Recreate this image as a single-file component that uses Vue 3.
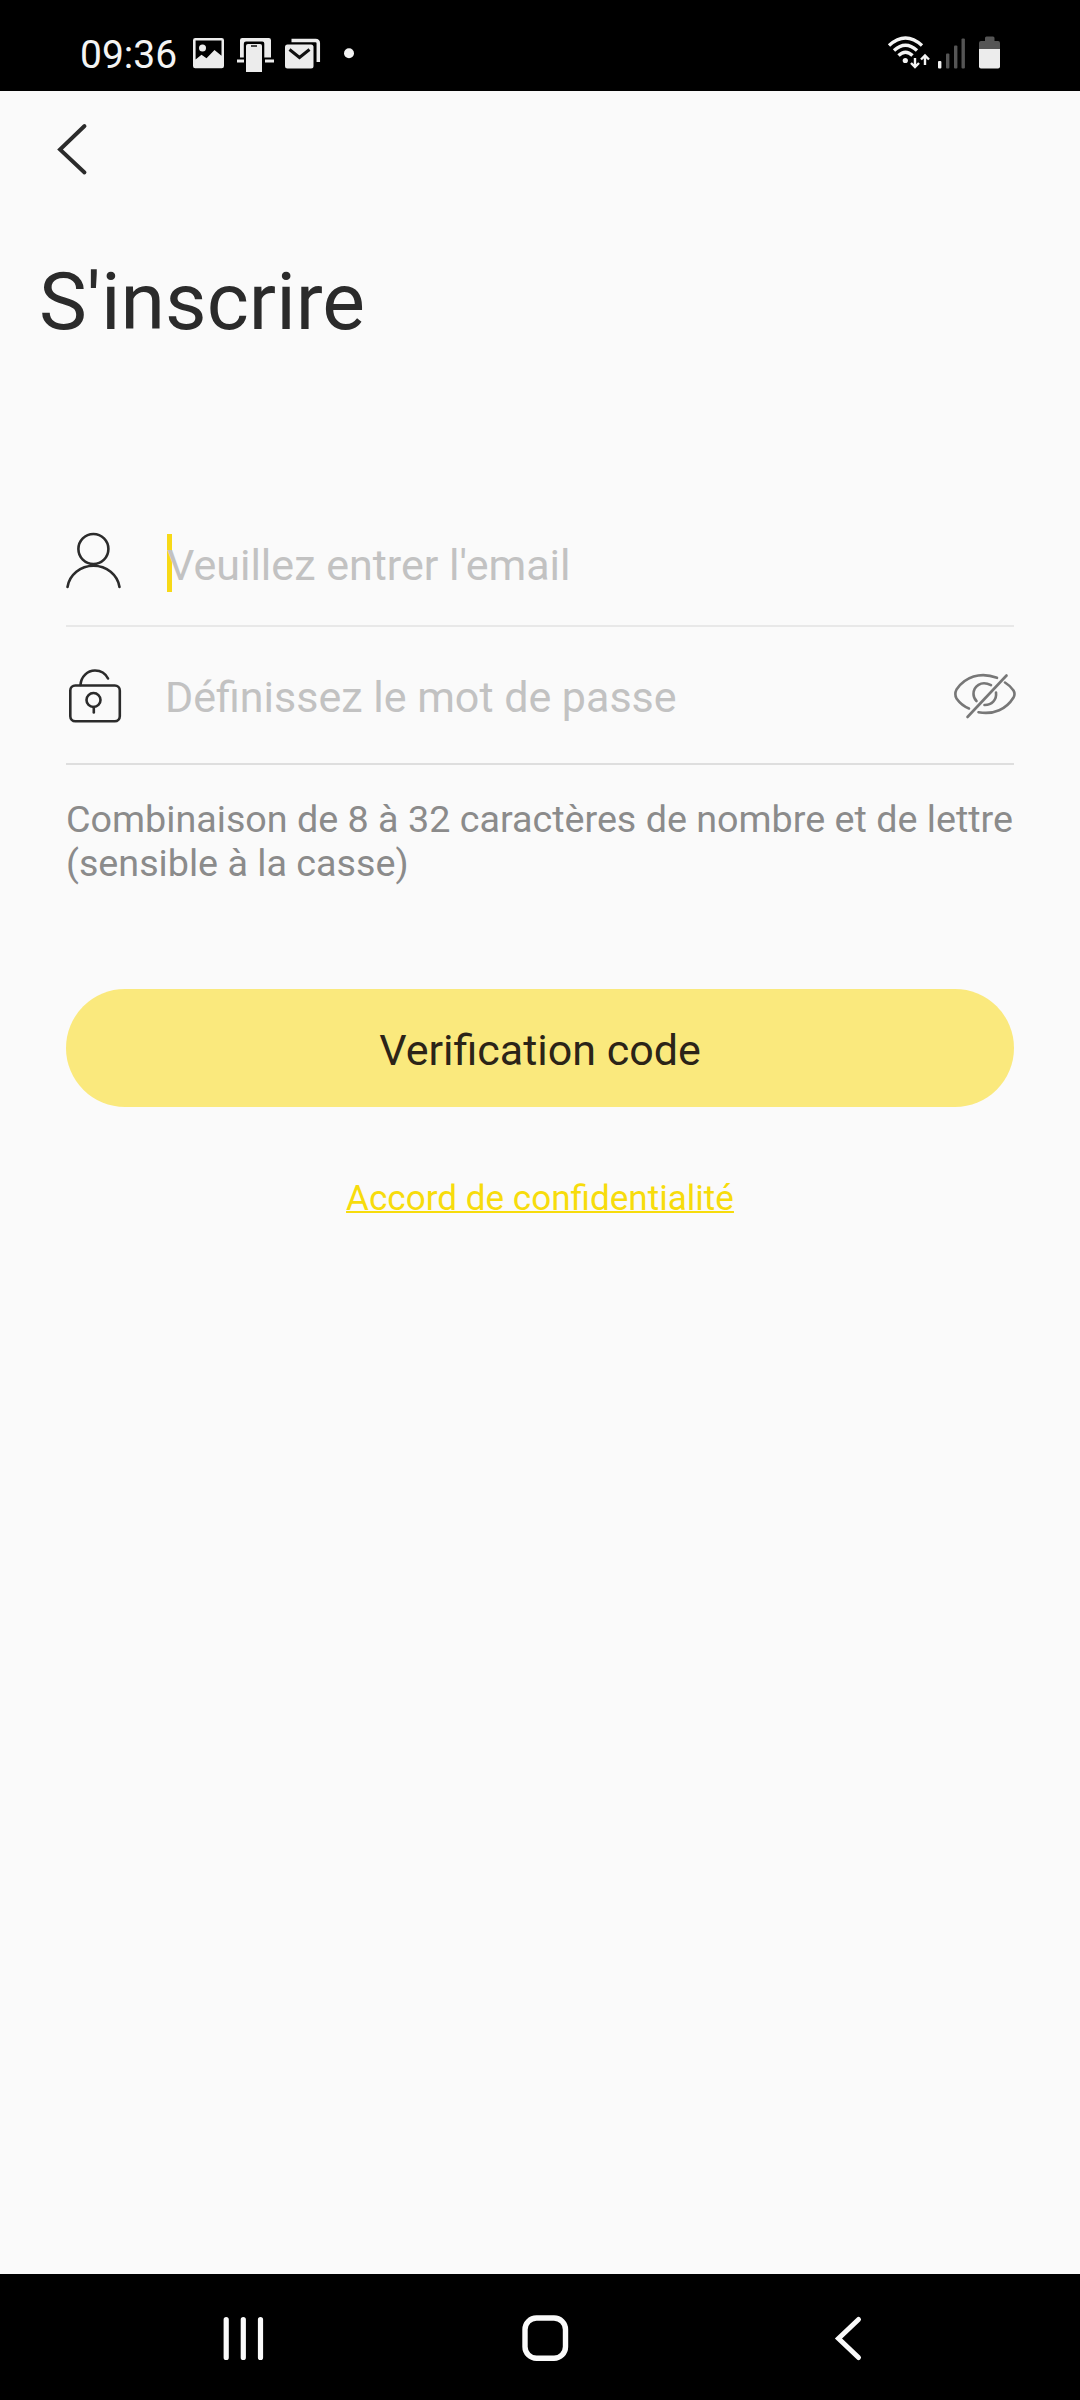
<script setup>
const title = "S'inscrire"
const emailHint = "Veuillez entrer l'email"
const passwordHint = 'Définissez le mot de passe'
const bars = [
  { x: 938, y: 61, h: 7.5, color: '#f2f2f2' },
  { x: 946, y: 53.5, h: 15, color: '#555' },
  { x: 954, y: 45.5, h: 23, color: '#555' },
  { x: 961.5, y: 38.5, h: 30, color: '#555' },
]
</script>

<template>
  <div class="screen">
    <header class="status">
      <span class="clock">09:36</span>
      <svg class="notices" width="170" height="40" viewBox="190 35 170 40">
        <path fill="#ececec" fill-rule="evenodd" d="M195.300 38H221.700Q224 38 224 40.300V66Q224 68.300 221.700 68.300H195.300Q193 68.300 193 66V40.300Q193 38 195.300 38ZM195.600 40.500V59.500L201.500 54.800L206.500 58.200L214.500 50L221.500 55.800V40.500Z" />
        <circle cx="202.500" cy="48" r="3.500" fill="#ececec" />
        <path fill="#ececec" d="M240 40.200Q240 38 242.200 38H268.800Q271 38 271 40.200V57.500H264.300V43.500Q264.300 41.500 262.300 41.500H246Q243.800 41.500 243.800 43.700V57.500H240ZM237 59.500H244V62.500H237ZM265 59.500H274V62.500H265Z" />
        <path fill="#ececec" d="M246 46Q246 44 248 44H260Q262 44 262 46V72H246Z" />
        <path d="M251 46H257" stroke="#111" stroke-width="1.500" />
        <path d="M291.500 40.500H315.500Q318.300 40.500 318.300 43.300V62" fill="none" stroke="#ececec" stroke-width="3.500" />
        <rect x="285" y="44.500" width="28.500" height="24" rx="2.500" fill="#ececec" />
        <path d="M289.500 49.500L299.500 57.500L309.500 49.500" fill="none" stroke="#111" stroke-width="3" />
        <circle cx="349" cy="53.200" r="5" fill="#f4f4f4" />
      </svg>
      <svg class="signals" width="116" height="40" viewBox="886 34 116 40">
        <g fill="none" stroke="#f4f4f4" stroke-width="3.400">
          <path d="M889 45.500Q905.500 30.500 922 45.500" />
          <path d="M894 50.500Q905.500 40 917 50.500" />
          <path d="M898.500 55.500Q905.500 49 912.500 55.500" />
        </g>
        <circle cx="905.300" cy="60.500" r="2.600" fill="#f4f4f4" />
        <path d="M915 58V67M911 63L915 67L919 63M925 65V56M921 59.500L925 55.500L929 59.500" fill="none" stroke="#f4f4f4" stroke-width="2.400" />
        <rect v-for="b in bars" :key="b.x" :x="b.x" :y="b.y" width="3.400" :height="b.h" rx="1" :fill="b.color" />
        <path fill="#555" d="M979 50V43Q979 41 981 41H985V38Q985 36.500 986.500 36.500H993Q994.500 36.500 994.500 38V41H998Q1000 41 1000 43V50Z" />
        <path fill="#ececec" d="M979 49H1000V66.500Q1000 68.500 998 68.500H981Q979 68.500 979 66.500Z" />
      </svg>
    </header>

    <main>
      <svg class="back" width="32" height="54" viewBox="56 122 32 54">
        <path d="M84.500 126L60 149.500L84.500 172.500" fill="none" stroke="#2b2b2b" stroke-width="3.900" stroke-linecap="round" />
      </svg>
      <h1>{{ title }}</h1>

      <section class="form">
        <div class="field email">
          <svg width="60" height="62" viewBox="64 530 60 62" fill="none" stroke="#2b2b2b" stroke-width="2.600" stroke-linecap="round">
            <circle cx="93.400" cy="549" r="15" />
            <path d="M67.500 587A26.300 25 0 0 1 119.500 587" />
          </svg>
          <span class="placeholder first">{{ emailHint }}</span>
        </div>
        <div class="field password">
          <svg width="60" height="62" viewBox="64 664 60 62" fill="none" stroke="#2b2b2b" stroke-width="2.600" stroke-linecap="round">
            <rect x="70.300" y="685.500" width="49.500" height="35.800" rx="5" />
            <path d="M80.500 685C81 676.500 87.500 670.500 95 670.500C101 670.500 105.500 673.500 108 678.500" />
            <circle cx="93.500" cy="700" r="7" />
            <path d="M93.800 707V712.500" />
          </svg>
          <span class="placeholder">{{ passwordHint }}</span>
          <svg class="eye" width="64" height="48" viewBox="952 671 64 48" fill="none" stroke="#777" stroke-width="2.600" stroke-linecap="round">
            <path d="M997 677.800C980 671.500 965 677 956.500 689.500Q954.200 694 956.500 698.500Q961.500 705.500 969 708.500" />
            <path d="M978.500 712.200C994 715 1006.500 709 1013.500 697.500Q1015.500 694 1013.500 690.500Q1010 685.500 1005 682.500" />
            <path d="M991 685.200C981 680 973.500 686.500 973.500 694Q973.500 698 976.500 701" />
            <path d="M996 692.500C997 700 991.500 705.200 984.500 705" />
            <path d="M1006.500 675.500L967.500 717" />
          </svg>
        </div>
        <p class="hint">Combinaison de 8 à 32 caractères de nombre et de lettre<br />(sensible à la casse)</p>
        <button type="button">Verification code</button>
        <a class="privacy">Accord de confidentialité</a>
      </section>
    </main>

    <nav>
      <svg width="44" height="50" viewBox="221 2313 44 50" stroke="#fafafa" stroke-width="5.200" stroke-linecap="round">
        <path d="M226.200 2319.500V2357.500M243.300 2319.500V2357.500M260.500 2319.500V2357.500" />
      </svg>
      <svg class="home" width="50" height="50" viewBox="520.500 2313 50 50">
        <rect x="525.500" y="2318" width="40.500" height="40.200" rx="11.500" fill="none" stroke="#fafafa" stroke-width="5.400" />
      </svg>
      <svg width="32" height="50" viewBox="832 2313 32 50">
        <path d="M858.500 2319.500L838.500 2338.500L858.500 2357.500" fill="none" stroke="#fafafa" stroke-width="5" stroke-linecap="round" />
      </svg>
    </nav>
  </div>
</template>

<style>
body {
  margin: 0;
  background: #fafafa;
}
</style>

<style scoped>
.screen {
  width: 1080px;
  height: 2400px;
  display: flex;
  flex-direction: column;
  background: #fafafa;
  font-family: Roboto, sans-serif;
  color: #2b2b2b;
}
.screen * {
  box-sizing: border-box;
}
svg {
  display: block;
  flex: none;
}
.status {
  height: 91px;
  flex: none;
  display: flex;
  align-items: flex-start;
  background: #000;
  padding: 0 78px 0 80px;
}
.clock {
  width: 110px;
  font-size: 39px;
  line-height: 46px;
  margin-top: 32px;
  color: #f4f4f4;
}
.notices {
  margin-top: 35px;
}
.signals {
  margin: 34px 0 0 auto;
}
main {
  flex: 1;
  display: flex;
  flex-direction: column;
}
.back {
  margin: 31px 0 0 56px;
}
h1 {
  margin: 79px 0 0 39px;
  font-size: 80.6px;
  line-height: 94px;
  font-weight: 400;
}
.form {
  margin: 150px 66px 0;
  display: flex;
  flex-direction: column;
}
.field {
  display: flex;
  align-items: flex-start;
  border-bottom: 2px solid #e8e8e8;
}
.field > svg:first-child {
  margin-left: -2px;
}
.email {
  height: 128px;
  padding-top: 31px;
}
.password {
  height: 138px;
  padding-top: 37px;
  border-color: #dedede;
}
.placeholder {
  margin: 8px 0 0 41px;
  font-size: 43px;
  line-height: 50px;
  color: #c2c2c2;
  white-space: nowrap;
}
.first {
  position: relative;
  z-index: 0;
  margin: 10px 0 0 43px;
}
.first::before {
  content: '';
  position: absolute;
  left: 0;
  top: -6px;
  width: 5px;
  height: 58px;
  background: #f7d917;
  z-index: -1;
}
.eye {
  margin: 7px -2px 0 auto;
}
.hint {
  margin: 32px 0 0;
  font-size: 37.7px;
  line-height: 44.4px;
  color: #8b8b8b;
  white-space: nowrap;
}
button {
  margin-top: 103px;
  height: 118px;
  border: 0;
  border-radius: 59px;
  background: #fae97d;
  color: #2b2418;
  font: 400 43px/50px Roboto, sans-serif;
  padding: 4px 0 0;
}
.privacy {
  align-self: center;
  margin-top: 71px;
  font-size: 35.1px;
  line-height: 41px;
  color: #f7dc0c;
  text-decoration: underline;
  text-decoration-thickness: 2px;
}
nav {
  height: 126px;
  flex: none;
  display: flex;
  justify-content: space-between;
  align-items: flex-start;
  background: #000;
  padding: 39px 216px 0 221px;
}
.home {
  margin-right: 7px;
}
</style>
